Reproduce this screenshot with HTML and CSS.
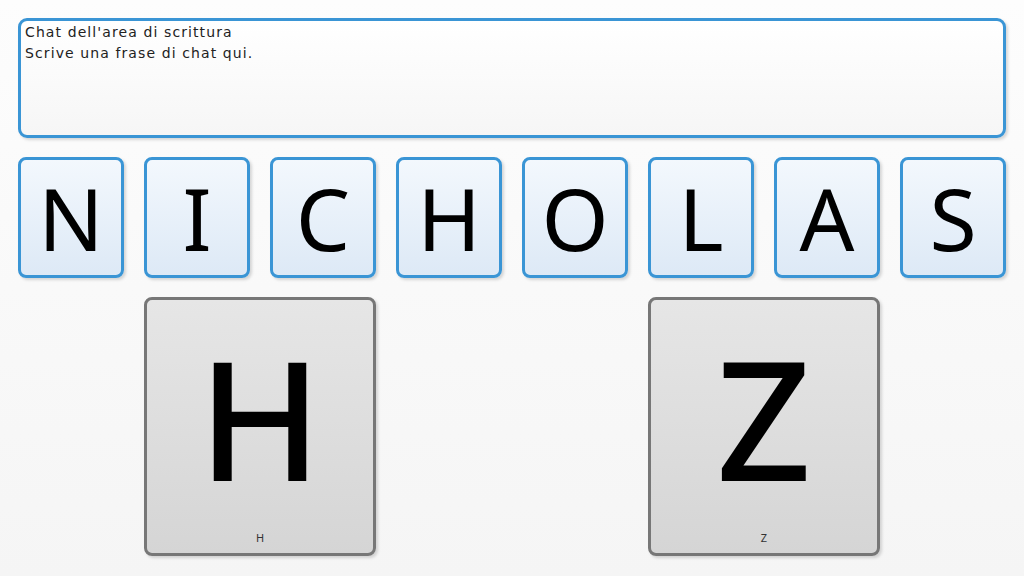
FILE: index.html
```html
<!DOCTYPE html>
<html lang="it">
<head>
    <meta charset="UTF-8">
    <meta name="viewport" content="width=device-width, initial-scale=1.0">
    <title>Scrittura</title>
    <link rel="stylesheet" href="styles.css">
</head>
<body>
    <div class="board">
        <div class="chat-area">
            <div>Chat dell'area di scrittura</div>
            <div>Scrive una frase di chat qui.</div>
        </div>
        <div class="tile">N</div>
        <div class="tile">I</div>
        <div class="tile">C</div>
        <div class="tile">H</div>
        <div class="tile">O</div>
        <div class="tile">L</div>
        <div class="tile">A</div>
        <div class="tile">S</div>
        <div class="card card-h">
            <div class="card-letter">H</div>
            <div class="card-label">H</div>
        </div>
        <div class="card card-z">
            <div class="card-letter">Z</div>
            <div class="card-label">Z</div>
        </div>
    </div>
</body>
</html>
```

FILE: styles.css
```css
html, body {
    height: 100%;
}
body {
    margin: 0;
    padding: 18px;
    box-sizing: border-box;
    background: linear-gradient(#fdfdfd, #f5f5f5);
    font-family: 'Noto Sans', sans-serif;
    color: #222;
}
.board {
    display: grid;
    grid-template-columns: repeat(8, 1fr);
    grid-template-rows: 120px 121px 259px;
    column-gap: 20px;
    row-gap: 19px;
    width: 988px;
}
.chat-area {
    grid-column: 1 / -1;
    border: 3px solid #3a95d5;
    border-radius: 9px;
    background: linear-gradient(#ffffff, #f6f6f6);
    box-shadow: 2px 2px 3px rgba(0, 0, 0, 0.15);
    padding: 1px 4px;
    font-family: 'DejaVu Sans', sans-serif;
    font-size: 14px;
    letter-spacing: 1.1px;
    line-height: 21px;
    color: #222;
}
.tile {
    display: flex;
    align-items: center;
    justify-content: center;
    border: 3px solid #3a95d5;
    border-radius: 8px;
    background: linear-gradient(#f3f8fd, #dde9f6);
    box-shadow: 2px 2px 3px rgba(0, 0, 0, 0.15);
    font-size: 86px;
    font-weight: 400;
    color: #000;
    line-height: 1;
}
.card {
    display: flex;
    flex-direction: column;
    align-items: center;
    border: 3px solid #777;
    border-radius: 8px;
    background: linear-gradient(#e6e6e6, #d5d5d5);
    box-shadow: 2px 2px 3px rgba(0, 0, 0, 0.15);
}
.card-h {
    grid-column: 2 / 4;
}
.card-z {
    grid-column: 6 / 8;
}
.card-letter {
    flex: 1;
    display: flex;
    align-items: center;
    justify-content: center;
    font-size: 166px;
    font-weight: 500;
    line-height: 0.8;
    color: #000;
    padding-top: 4px;
}
.card-label {
    font-size: 11px;
    color: #333;
    padding-bottom: 8px;
}
```
